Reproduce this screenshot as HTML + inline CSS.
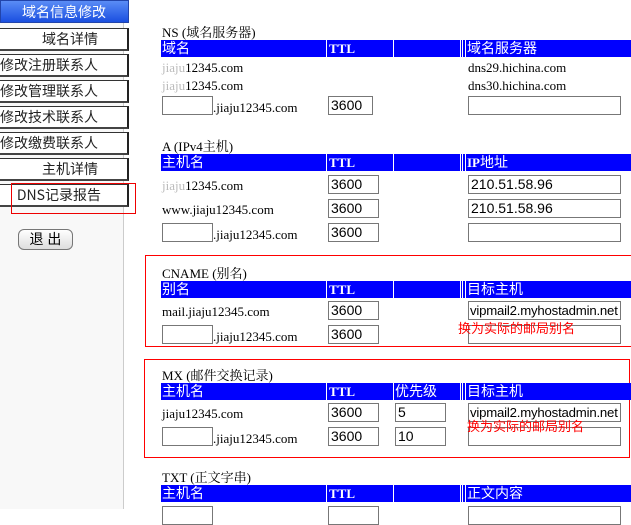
<!DOCTYPE html>
<html><head><meta charset="utf-8"><style>
*{margin:0;padding:0;box-sizing:border-box}
body{width:631px;height:509px;overflow:hidden;background:#fff;position:relative;font-family:"Liberation Serif","Noto Serif CJK SC",serif;font-size:13px;color:#000}
.a{position:absolute;white-space:nowrap}
.side{position:absolute;left:0;top:0;width:124px;height:509px;background:#f8f8f8;border-right:1px solid #ccc}
.hd{position:absolute;left:0;top:0;width:129px;height:23px;background:linear-gradient(#5a8cf6,#1a4fe0);color:#fff;font:14px "WenQuanYi Zen Hei","Noto Sans CJK SC",sans-serif;line-height:23px;text-align:right;padding-right:22px;border:1px solid #2244aa;white-space:nowrap}
.btn{position:absolute;left:-4px;width:133px;height:23px;background:#fff;border:1px solid #333;border-right:2px solid #222;border-bottom:2px solid #444;font:14px "WenQuanYi Zen Hei","Noto Sans CJK SC",sans-serif;line-height:20px;text-align:right;padding-right:29px;color:#222;white-space:nowrap}
.bar{position:absolute;left:161px;width:470px;height:17px;background:#0000ff;color:#fff;font-size:14px;line-height:17px;font-family:"Liberation Sans","WenQuanYi Zen Hei",sans-serif}
.bar i{position:absolute;top:0;width:1px;height:17px;background:#fff}
.bar span{position:absolute;top:0;white-space:nowrap}
.bar b{position:absolute;top:0;font-family:"Liberation Serif",serif;font-size:13px;white-space:nowrap}
.in{position:absolute;height:19px;border:1px solid #777;background:#fff;font:14px "Liberation Sans",sans-serif;line-height:17px;padding-left:2px;color:#000;overflow:hidden;white-space:nowrap}
.sm{font-size:13.2px;letter-spacing:-0.2px;padding-left:1px}
.t{position:absolute;font-size:13px;white-space:nowrap}
.red{color:#f00;font:13px "WenQuanYi Zen Hei","Noto Sans CJK SC",sans-serif;position:absolute;white-space:nowrap}
</style></head><body>
<div class="side"></div>
<div class="hd">域名信息修改</div>
<div class="btn" style="top:28px">域名详情</div>
<div class="btn" style="top:54px">修改注册联系人</div>
<div class="btn" style="top:80px">修改管理联系人</div>
<div class="btn" style="top:106px">修改技术联系人</div>
<div class="btn" style="top:132px">修改缴费联系人</div>
<div class="btn" style="top:158px">主机详情</div>
<div class="btn" style="top:184px;padding-right:26px">DNS记录报告</div>
<div class="a" style="left:11px;top:183px;width:125px;height:31px;border:1px solid #e00"></div>
<div class="a" style="left:18px;top:229px;width:55px;height:21px;border:1px solid #777;border-radius:6px;background:linear-gradient(#fff,#ddd);font:14px 'WenQuanYi Zen Hei',sans-serif;line-height:19px;text-align:center">退 出</div>

<!-- NS -->
<div class="t" style="left:162px;top:22px">NS (域名服务器)</div>
<div class="bar" style="top:40px"><span style="left:1px">域名</span><b style="left:168px">TTL</b><i style="left:165px"></i><i style="left:232px"></i><i style="left:299px"></i><i style="left:301px"></i><i style="left:304px"></i><span style="left:306px">域名服务器</span></div>
<div class="t" style="left:162px;top:60px;color:#bbb">jiaju<span style="color:#000">12345.com</span></div>
<div class="t" style="left:468px;top:60px">dns29.hichina.com</div>
<div class="t" style="left:162px;top:78px;color:#bbb">jiaju<span style="color:#000">12345.com</span></div>
<div class="t" style="left:468px;top:78px">dns30.hichina.com</div>
<div class="in" style="left:162px;top:96px;width:51px"></div><div class="t" style="left:213px;top:100px">.jiaju12345.com</div>
<div class="in" style="left:328px;top:96px;width:45px">3600</div>
<div class="in" style="left:468px;top:96px;width:153px"></div>

<!-- A -->
<div class="t" style="left:162px;top:136px">A (IPv4主机)</div>
<div class="bar" style="top:154px"><span style="left:1px">主机名</span><b style="left:168px">TTL</b><i style="left:165px"></i><i style="left:232px"></i><i style="left:299px"></i><i style="left:301px"></i><i style="left:304px"></i><b style="left:306px">IP<span style="position:static;font-family:'Liberation Sans','WenQuanYi Zen Hei',sans-serif;font-size:14px;font-weight:normal">地址</span></b></div>
<div class="t" style="left:162px;top:178px;color:#bbb">jiaju<span style="color:#000">12345.com</span></div>
<div class="in" style="left:328px;top:175px;width:51px">3600</div>
<div class="in" style="left:468px;top:175px;width:153px">210.51.58.96</div>
<div class="t" style="left:162px;top:202px">www.jiaju12345.com</div>
<div class="in" style="left:328px;top:199px;width:51px">3600</div>
<div class="in" style="left:468px;top:199px;width:153px">210.51.58.96</div>
<div class="in" style="left:162px;top:223px;width:51px"></div><div class="t" style="left:213px;top:227px">.jiaju12345.com</div>
<div class="in" style="left:328px;top:223px;width:51px">3600</div>
<div class="in" style="left:468px;top:223px;width:153px"></div>

<!-- CNAME -->
<div class="a" style="left:145px;top:255px;width:500px;height:92px;border:1px solid #f00"></div>
<div class="t" style="left:162px;top:263px">CNAME (别名)</div>
<div class="bar" style="top:281px"><span style="left:1px">别名</span><b style="left:168px">TTL</b><i style="left:165px"></i><i style="left:232px"></i><i style="left:299px"></i><i style="left:301px"></i><i style="left:304px"></i><span style="left:306px">目标主机</span></div>
<div class="t" style="left:162px;top:304px">mail.jiaju12345.com</div>
<div class="in" style="left:328px;top:301px;width:51px">3600</div>
<div class="in sm" style="left:468px;top:301px;width:153px">vipmail2.myhostadmin.net</div>
<div class="in" style="left:162px;top:325px;width:51px"></div><div class="t" style="left:213px;top:329px">.jiaju12345.com</div>
<div class="in" style="left:328px;top:325px;width:51px">3600</div>
<div class="in" style="left:468px;top:325px;width:153px"></div>
<div class="red" style="left:458px;top:318px">换为实际的邮局别名</div>

<!-- MX -->
<div class="a" style="left:144px;top:359px;width:486px;height:99px;border:1px solid #f00"></div>
<div class="t" style="left:162px;top:365px">MX (邮件交换记录)</div>
<div class="bar" style="top:383px"><span style="left:1px">主机名</span><b style="left:168px">TTL</b><i style="left:165px"></i><i style="left:232px"></i><span style="left:234px">优先级</span><i style="left:299px"></i><i style="left:301px"></i><i style="left:304px"></i><span style="left:306px">目标主机</span></div>
<div class="t" style="left:162px;top:406px">jiaju12345.com</div>
<div class="in" style="left:328px;top:403px;width:51px">3600</div>
<div class="in" style="left:395px;top:403px;width:51px">5</div>
<div class="in sm" style="left:468px;top:403px;width:153px">vipmail2.myhostadmin.net</div>
<div class="in" style="left:162px;top:427px;width:51px"></div><div class="t" style="left:213px;top:431px">.jiaju12345.com</div>
<div class="in" style="left:328px;top:427px;width:51px">3600</div>
<div class="in" style="left:395px;top:427px;width:51px">10</div>
<div class="in" style="left:468px;top:427px;width:153px"></div>
<div class="red" style="left:467px;top:416px">换为实际的邮局别名</div>

<!-- TXT -->
<div class="t" style="left:162px;top:467px">TXT (正文字串)</div>
<div class="bar" style="top:485px"><span style="left:1px">主机名</span><b style="left:168px">TTL</b><i style="left:165px"></i><i style="left:232px"></i><i style="left:299px"></i><i style="left:301px"></i><i style="left:304px"></i><span style="left:306px">正文内容</span></div>
<div class="in" style="left:162px;top:506px;width:51px"></div>
<div class="in" style="left:328px;top:506px;width:51px"></div>
<div class="in" style="left:468px;top:506px;width:153px"></div>
</body></html>
